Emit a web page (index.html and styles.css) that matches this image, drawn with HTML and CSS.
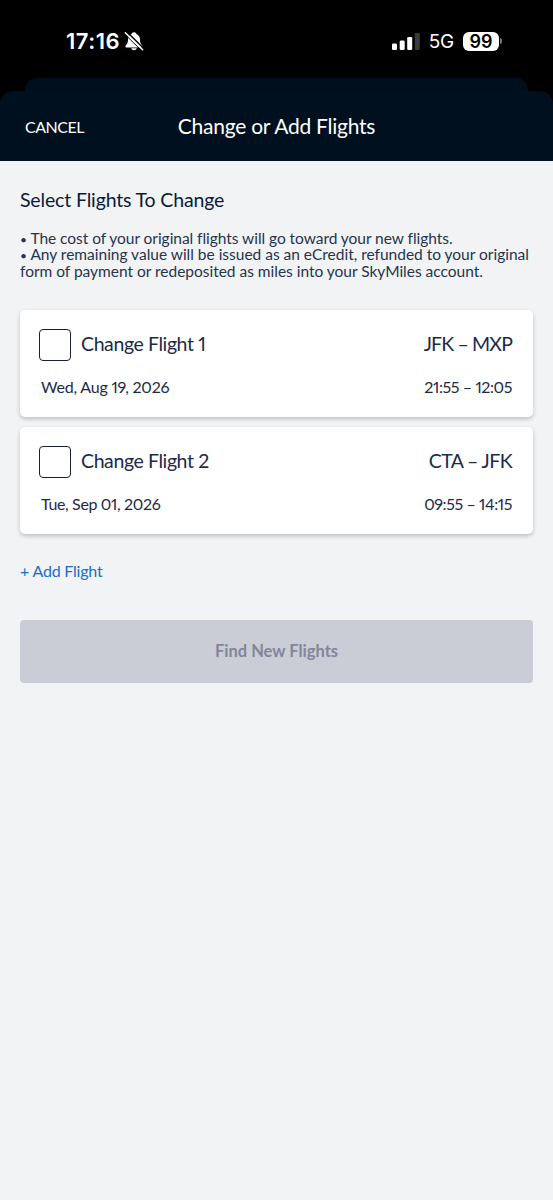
FILE: index.html
```
<!DOCTYPE html>
<html lang="en">
<head>
<meta charset="utf-8">
<title>Change or Add Flights</title>
<link rel="stylesheet" href="styles.css">
</head>
<body>
<div class="status-bar">
  <div class="clock">
    <span class="time">17:16</span>
    <svg class="bell" width="20" height="20" viewBox="0 0 20 20">
      <path d="M10 1.200c-1.400 0-2.200.8-2.400 1.800C5.200 3.900 4 6 4 8.600c0 3.300-.7 4.300-2.200 5.900-.9 1-.4 1.900.7 1.900h15c1.100 0 1.600-.9.700-1.900C16.700 12.900 16 11.900 16 8.600c0-2.600-1.200-4.700-3.600-5.600-.2-1-1-1.800-2.400-1.800z" fill="#fff"/>
      <path d="M7.200 17.300h5.600c-.3 1.200-1.400 2-2.800 2s-2.500-.8-2.800-2z" fill="#fff"/>
      <path d="M2.400.4l17.600 17.300" stroke="#000" stroke-width="1.500"/>
      <path d="M.2 2.600l17.600 17.300" stroke="#000" stroke-width="1"/>
      <path d="M1.300 1.700l17.300 17" stroke="#fff" stroke-width="1.500" stroke-linecap="round"/>
    </svg>
  </div>
  <div class="indicators">
    <svg class="signal" width="28" height="18" viewBox="0 0 28 18">
      <rect x="0" y="10.500" width="5" height="6.500" rx="1.300" fill="#fff"/>
      <rect x="7.700" y="7.500" width="5" height="9.500" rx="1.300" fill="#fff"/>
      <rect x="15.200" y="4" width="5" height="13" rx="1.300" fill="#fff"/>
      <rect x="22.800" y="0" width="5" height="17" rx="1.300" fill="#3b3b3b"/>
    </svg>
    <span class="network">5G</span>
    <span class="battery">99</span>
    <span class="battery-tip"></span>
  </div>
</div>
<div class="sheet-behind"></div>
<header class="header">
  <span class="cancel">CANCEL</span>
  <h1 class="title">Change or Add Flights</h1>
</header>
<main class="content">
  <h2 class="heading">Select Flights To Change</h2>
  <p class="notes"><span class="note-a"><span class="bullet">•</span> The cost of your original flights will go toward your new flights.</span><br><span class="note-b"><span class="bullet">•</span> Any remaining value will be issued as an eCredit, refunded to your original</span><br><span class="note-c">form of payment or redeposited as miles into your SkyMiles account.</span></p>
  <section class="card">
    <div class="card-top"><span class="checkbox"></span><span class="name">Change Flight 1</span><span class="route">JFK – MXP</span></div>
    <div class="card-bottom"><span class="date">Wed, Aug 19, 2026</span><span class="hours">21:55 – 12:05</span></div>
  </section>
  <section class="card">
    <div class="card-top"><span class="checkbox"></span><span class="name">Change Flight 2</span><span class="route wide">CTA – JFK</span></div>
    <div class="card-bottom"><span class="date tight">Tue, Sep 01, 2026</span><span class="hours">09:55 – 14:15</span></div>
  </section>
  <a class="add">+ Add Flight</a>
  <button class="find" disabled>Find New Flights</button>
</main>
</body>
</html>
```
FILE: styles.css
```
* { box-sizing: border-box; }
body { margin: 0; width: 553px; height: 1200px; display: flex; flex-direction: column; background: #000; font-family: Lato, "Open Sans", sans-serif; color: #1c2a48; white-space: nowrap; overflow: hidden; font-variant-numeric: proportional-nums; }
h1, h2, p { margin: 0; font-weight: 400; }
.status-bar { height: 78px; display: flex; justify-content: space-between; align-items: flex-start; padding: 30px 51px 0 66px; color: #fff; font-family: Inter, sans-serif; }
.clock { display: flex; align-items: center; height: 22px; gap: 4px; }
.time { font-size: 22px; font-weight: 600; letter-spacing: 0.5px; }
.indicators { display: flex; align-items: center; height: 22px; }
.signal { margin-top: 2px; }
.network { font-size: 19px; margin-left: 9px; letter-spacing: -0.3px; }
.battery { margin-left: 9px; width: 36px; height: 19px; border-radius: 6px; background: #fff; color: #000; font-size: 18px; font-weight: 600; line-height: 19px; text-align: center; }
.battery-tip { width: 2px; height: 6px; margin-left: 1px; border-radius: 0 2px 2px 0; background: #777; }
.sheet-behind { height: 13px; margin: 0 25px; border-radius: 12px 12px 0 0; background: #000f1e; }
.header { height: 70px; display: grid; grid-template-columns: 1fr auto 1fr; align-items: center; padding: 0 25px; border-radius: 13px 13px 0 0; background: #00101f; color: #fff; }
.cancel { font-size: 16px; padding-top: 1px; letter-spacing: -0.5px; }
.title { font-size: 21px; line-height: 24px; letter-spacing: -0.25px; }
.content { flex: 1; display: flex; flex-direction: column; background: #f1f3f5; padding: 27px 20px 0; }
.heading { font-size: 19.5px; line-height: 24px; letter-spacing: -0.15px; color: #0b1a3a; }
.notes { margin-top: 18px; font-size: 15.500px; line-height: 16.300px; color: #28344d; }
.bullet { font-size: 12px; line-height: 1; letter-spacing: 0; }
.note-a { letter-spacing: -0.045px; }
.note-b { letter-spacing: -0.010px; }
.note-c { letter-spacing: -0.015px; }
.card { height: 107px; margin-bottom: 10px; padding: 19px 21px 0 19px; border-radius: 5px; background: #fff; box-shadow: 0 2px 4px rgba(0,0,0,.22); }
.notes + .card { margin-top: 31px; }
.card-top { display: flex; height: 32px; line-height: 30px; font-size: 19.500px; }
.checkbox { width: 32px; height: 32px; border: 1.500px solid #14213d; border-radius: 4px; margin-right: 10px; }
.name { letter-spacing: -0.400px; }
.route { margin-left: auto; letter-spacing: -0.850px; }
.route.wide { letter-spacing: -0.600px; }
.card-bottom { display: flex; justify-content: space-between; margin: 15px 0 0 2px; font-size: 16px; line-height: 22px; }
.date { letter-spacing: -0.200px; }
.date.tight { letter-spacing: -0.350px; }
.hours { letter-spacing: -0.400px; }
.add { margin-top: 16px; font-size: 16px; line-height: 22px; letter-spacing: -0.200px; color: #1a6fc9; }
.find { margin-top: 38px; height: 63px; border: 0; border-radius: 4px; background: #cacdd6; color: #82859b; font: 700 16.500px/24px Lato, sans-serif; }
```
